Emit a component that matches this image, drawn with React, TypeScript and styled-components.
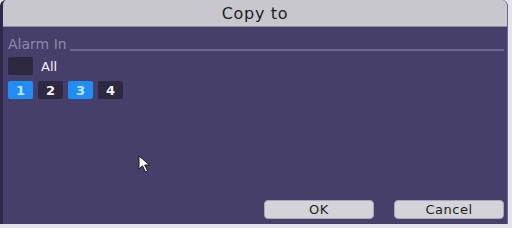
import * as React from 'react';
import styled, { createGlobalStyle } from 'styled-components';

const Global = createGlobalStyle`
  html, body {
    margin: 0;
    padding: 0;
    background: #e4e3ea;
    width: 512px;
    height: 228px;
    overflow: hidden;
    font-family: "DejaVu Sans", "Liberation Sans", Arial, sans-serif;
  }
`;

const Dialog = styled.div`
  position: relative;
  width: 508px;
  height: 224px;
  display: flex;
  flex-direction: column;
  background: #463f69;
  border-radius: 6px 6px 0 0;
  border-left: 3px solid #2f2a4b;
  border-right: 1px solid #6d6690;
  box-sizing: border-box;
  overflow: hidden;
`;

const TitleBar = styled.div`
  height: 27px;
  flex-shrink: 0;
  display: flex;
  align-items: center;
  justify-content: center;
  background: #c7c7cd;
  border-bottom: 1px solid #8f8aa8;
  color: #1f1f24;
  font-size: 16px;
  letter-spacing: 0.7px;
  box-sizing: border-box;
`;

const Body = styled.div`
  flex: 1;
  display: flex;
  flex-direction: column;
  padding: 7px 3px 4px 5px;
`;

const Section = styled.div`
  display: flex;
  align-items: flex-end;
  gap: 3px;
  height: 18px;
`;

const SectionLabel = styled.span`
  color: #8b87ab;
  font-size: 14px;
  line-height: 15px;
`;

const SectionLine = styled.div`
  flex: 1;
  height: 2px;
  margin-bottom: 1px;
  background: #6b6590;
`;

const Row = styled.div<{ $top: number }>`
  display: flex;
  align-items: center;
  gap: 5px;
  margin-top: ${(p) => p.$top}px;
`;

const Box = styled.div<{ $on?: boolean }>`
  width: 25px;
  height: 18px;
  border-radius: 2px;
  display: flex;
  align-items: center;
  justify-content: center;
  background: ${(p) => (p.$on ? '#1f8dfb' : '#2c2940')};
  color: ${(p) => (p.$on ? '#c9e3ff' : '#f2f2f5')};
  font-size: 13px;
  font-weight: 600;
`;

const AllLabel = styled.span`
  color: #f2f2f5;
  font-size: 13px;
  margin-left: 3px;
`;

const Spacer = styled.div`
  flex: 1;
`;

const Footer = styled.div`
  display: flex;
  justify-content: flex-end;
  gap: 20px;
  margin-bottom: 1px;
`;

const Button = styled.div`
  width: 110px;
  height: 19px;
  border-radius: 4px;
  background: #d3d3d8;
  border: 1px solid #a9a6bb;
  box-sizing: border-box;
  display: flex;
  align-items: center;
  justify-content: center;
  color: #1f1f24;
  font-size: 13px;
  letter-spacing: 0.5px;
`;

const Cursor = styled.svg`
  position: absolute;
  left: 135px;
  top: 155px;
`;

const channels = [
  { n: 1, on: true },
  { n: 2, on: false },
  { n: 3, on: true },
  { n: 4, on: false },
];

export default function App() {
  return (
    <>
      <Global />
      <Dialog>
        <TitleBar>Copy to</TitleBar>
        <Body>
          <Section>
            <SectionLabel>Alarm In</SectionLabel>
            <SectionLine />
          </Section>
          <Row $top={5}>
            <Box />
            <AllLabel>All</AllLabel>
          </Row>
          <Row $top={6}>
            {channels.map((c) => (
              <Box key={c.n} $on={c.on}>
                {c.n}
              </Box>
            ))}
          </Row>
          <Spacer />
          <Footer>
            <Button>OK</Button>
            <Button>Cancel</Button>
          </Footer>
        </Body>
        <Cursor width="16" height="19" viewBox="0 0 16 19">
          <path
            d="M1 1 L1 14 L4.5 10.8 L7.5 17 L9.6 16 L6.7 10 L11.5 10 Z"
            fill="#ffffff"
            stroke="#1a1a1a"
            strokeWidth="1"
          />
        </Cursor>
      </Dialog>
    </>
  );
}
